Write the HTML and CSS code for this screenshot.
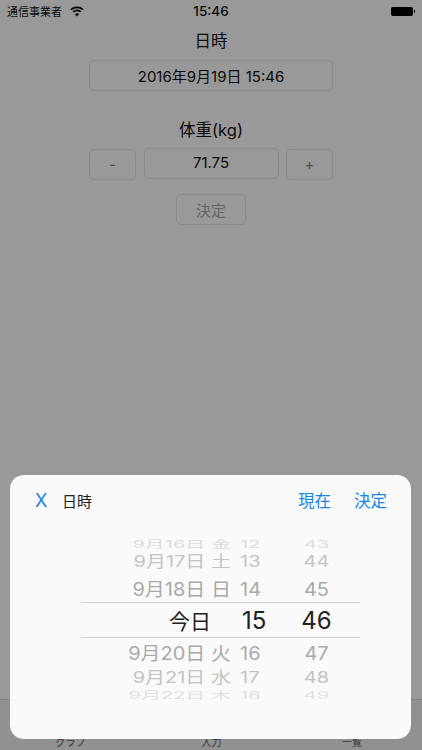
FILE: index.html
```html
<!DOCTYPE html>
<html>
<head>
    <meta name="viewport" content="width=device-width, initial-scale=1.0">
    <title>体重入力</title>
    <link rel="stylesheet" href="styles.css">
</head>
<body>
    <div class="page">
        <div class="statusbar">
            <div class="carrier">
                <span>通信事業者</span>
                <svg class="wifi" width="14" height="11" viewBox="0 0 14 11">
                    <path d="M1 3.6C4.4.6 9.6.6 13 3.6M3.2 5.9c2.2-1.9 5.4-1.9 7.6 0" fill="none" stroke="#000" stroke-width="1.7"/>
                    <path d="M5 8c1.2-1 2.8-1 4 0l-2 2.4z" fill="#000"/>
                </svg>
            </div>
            <div class="time">15:46</div>
            <div class="battery"><div class="battery-body"></div><div class="battery-tip"></div></div>
        </div>

        <div class="form">
            <div class="label">日時</div>
            <button class="btn date-btn">2016年9月19日 15:46</button>
            <div class="label weight-label">体重(kg)</div>
            <div class="weight-row">
                <button class="btn step-btn">-</button>
                <div class="btn weight-field">71.75</div>
                <button class="btn step-btn">+</button>
            </div>
            <button class="btn submit-btn">決定</button>
        </div>

        <div class="tabbar">
            <span>グラフ</span>
            <span>入力</span>
            <span>一覧</span>
        </div>
    </div>

    <div class="overlay">
        <div class="sheet">
            <div class="sheet-header">
                <span class="link close">X</span>
                <span class="sheet-title">日時</span>
                <span class="link now">現在</span>
                <span class="link">決定</span>
            </div>
            <div class="picker">
                <div class="row far"><span class="date">9月16日 金</span><span>12</span><span class="min">43</span></div>
                <div class="row near"><span class="date">9月17日 土</span><span>13</span><span class="min">44</span></div>
                <div class="row close-row above"><span class="date">9月18日 日</span><span>14</span><span class="min">45</span></div>
                <div class="row selected"><span class="date">今日</span><span>15</span><span class="min">46</span></div>
                <div class="row close-row below"><span class="date">9月20日 火</span><span>16</span><span class="min">47</span></div>
                <div class="row near low"><span class="date">9月21日 水</span><span>17</span><span class="min">48</span></div>
                <div class="row far low"><span class="date">9月22日 木</span><span>18</span><span class="min">49</span></div>
            </div>
        </div>
    </div>
</body>
</html>
```

FILE: styles.css
```css
* {
    box-sizing: border-box;
}
body {
    margin: 0;
    background: #fff;
    font-family: Inter, "Noto Sans CJK JP", sans-serif;
    color: #111;
}
.page {
    height: 750px;
    display: flex;
    flex-direction: column;
}
.statusbar {
    height: 22px;
    padding: 0 7px 0 7px;
    display: flex;
    align-items: center;
    justify-content: space-between;
    position: relative;
    font-size: 11px;
}
.carrier {
    display: flex;
    align-items: center;
    gap: 8px;
}
.time {
    position: absolute;
    left: 0;
    right: 0;
    text-align: center;
    font-size: 13.5px;
    font-weight: 500;
}
.battery {
    display: flex;
    align-items: center;
}
.battery-body {
    width: 22px;
    height: 9px;
    background: #000;
    border-radius: 2px;
}
.battery-tip {
    width: 1px;
    height: 3px;
    margin-left: 1px;
    background: #000;
}
.form {
    flex: 1;
    width: 244px;
    margin: 0 auto;
    display: flex;
    flex-direction: column;
    align-items: center;
}
.label {
    font-size: 16.5px;
    line-height: 22px;
    margin: 8px 0 8px;
}
.weight-label {
    margin: 28px 0 7px;
}
.btn {
    background: #fff;
    border: 1px solid #e6e6e6;
    border-radius: 5px;
    font-family: inherit;
    font-size: 15px;
    color: #111;
    display: flex;
    align-items: center;
    justify-content: center;
    padding: 0;
}
.date-btn {
    width: 100%;
    height: 31px;
}
.weight-row {
    width: 100%;
    display: flex;
    justify-content: space-between;
    align-items: flex-start;
}
.step-btn {
    width: 47px;
    height: 31px;
    margin-top: 1px;
    color: #888;
    font-size: 15px;
}
.weight-field {
    width: 135px;
    height: 31px;
    padding-bottom: 2px;
}
.submit-btn {
    width: 70px;
    height: 31px;
    margin-top: 14px;
    font-size: 15px;
    color: #aaa;
}
.tabbar {
    height: 51px;
    background: #f2f2f2;
    border-top: 1px solid #d8d8d8;
    display: grid;
    grid-template-columns: 141px 141px 140px;
    align-items: end;
    justify-items: center;
    padding-bottom: 1px;
    font-size: 10px;
    color: #555;
}
.overlay {
    position: fixed;
    top: 0;
    left: 0;
    width: 100%;
    height: 100%;
    background: rgba(0, 0, 0, 0.4);
    display: flex;
    align-items: flex-end;
    padding: 0 11px 11px 10px;
}
.sheet {
    width: 100%;
    height: 264px;
    background: #fafafa;
    border-radius: 14px;
}
.sheet-header {
    height: 60px;
    padding: 0 24px 10px 25px;
    display: flex;
    align-items: center;
    font-size: 16.5px;
}
.link {
    color: #1a85e2;
}
.close {
    font-size: 18px;
    width: 27px;
}
.sheet-title {
    flex: 1;
    font-size: 15px;
    color: #222;
}
.now {
    margin-right: 23px;
}
.picker {
    padding-left: 71px;
    width: 350px;
}
.row {
    display: grid;
    grid-template-columns: 150px 58px 55px;
    column-gap: 0;
    width: 279px;
    font-size: 20px;
    align-items: center;
    color: #aaa;
}
.row span:nth-child(2) {
    padding-left: 9px;
}
.date {
    text-align: right;
    white-space: nowrap;
}
.min {
    text-align: center;
}
.far {
    height: 18px;
    color: #ddd;
    line-height: 18px;
}
.far span {
    transform: scaleY(0.5);
}
.near {
    height: 18px;
    color: #c4c4c4;
    line-height: 18px;
}
.near span {
    transform: scaleY(0.78);
}
.near.low {
    height: 22px;
}
.far.low {
    height: 12px;
    line-height: 12px;
    color: #e2e2e2;
}
.close-row {
    height: 31px;
    line-height: 31px;
}
.above {
    padding-top: 3px;
}
.below {
    height: 29px;
}
.close-row span {
    transform: scaleY(0.93);
}
.selected {
    height: 36px;
    border-top: 1px solid #d0d0d0;
    border-bottom: 1px solid #d0d0d0;
    color: #222;
    font-size: 24px;
}
.row.selected span:nth-child(2) {
    padding-left: 11px;
}
.selected .date {
    padding-right: 20px;
    font-size: 21px;
}
```
